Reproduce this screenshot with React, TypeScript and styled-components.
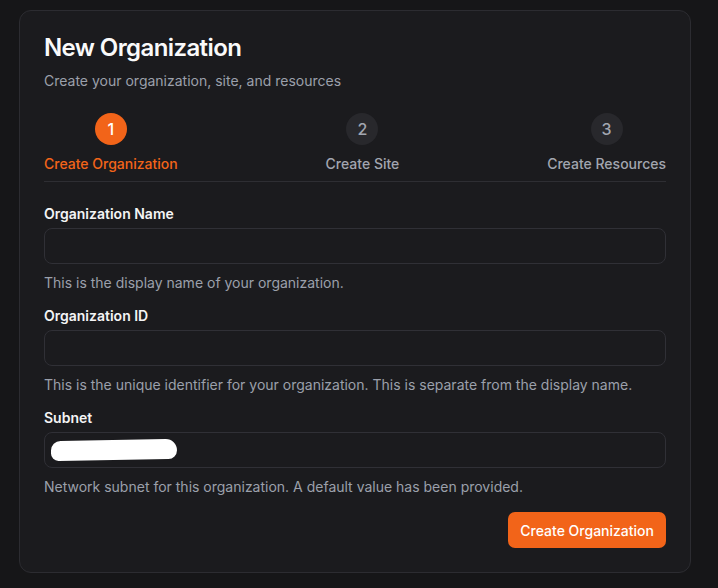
import React from "react";
import styled, { createGlobalStyle } from "styled-components";

const Global = createGlobalStyle`
  html, body { margin: 0; padding: 0; background: #161618; }
  body { font-family: Inter, "Noto Sans", sans-serif; -webkit-font-smoothing: antialiased; }
  * { box-sizing: border-box; }
`;

const Page = styled.div`
  padding: 10px 0 0 19px;
  width: 718px;
  height: 588px;
`;

const Card = styled.div`
  width: 672px;
  background: #1b1b1e;
  border: 1px solid #2c2c31;
  border-radius: 12px;
  padding: 21px 24px 24px 24px;
  display: flex;
  flex-direction: column;
`;

const Title = styled.h1`
  margin: 0;
  font-size: 24px;
  line-height: 32px;
  font-weight: 600;
  color: #fafafa;
  letter-spacing: -0.6px;
`;

const Subtitle = styled.p`
  margin: 7px 0 0 0;
  font-size: 14px;
  line-height: 20px;
  color: #9ba0ab;
`;

const Steps = styled.div`
  margin-top: 22px;
  display: flex;
  justify-content: space-between;
  padding-bottom: 7px;
  border-bottom: 1px solid #2e2e33;
`;

const Step = styled.div`
  display: flex;
  flex-direction: column;
  align-items: center;
  gap: 9px;
`;

const Circle = styled.div<{ $active?: boolean }>`
  width: 32px;
  height: 32px;
  border-radius: 50%;
  display: flex;
  align-items: center;
  justify-content: center;
  font-size: 16px;
  font-weight: 500;
  background: ${(p) => (p.$active ? "#f26419" : "#28282c")};
  color: ${(p) => (p.$active ? "#ffffff" : "#a2a6b0")};
`;

const StepLabel = styled.span<{ $active?: boolean }>`
  font-size: 14px;
  line-height: 20px;
  font-weight: 500;
  color: ${(p) => (p.$active ? "#f26419" : "#a2a6b0")};
`;

const Form = styled.div`
  margin-top: 25px;
  display: flex;
  flex-direction: column;
  gap: 16px;
`;

const Field = styled.div`
  display: flex;
  flex-direction: column;
`;

const Label = styled.label`
  font-size: 14px;
  line-height: 14px;
  font-weight: 600;
  color: #f4f4f5;
`;

const InputBox = styled.div`
  margin-top: 7px;
  height: 36px;
  border: 1px solid #303036;
  border-radius: 8px;
  background: #1b1b1e;
  display: flex;
  align-items: center;
  padding: 0 6px;
`;

const Redaction = styled.span`
  display: block;
  width: 126px;
  height: 20px;
  background: #ffffff;
  border-radius: 10px 12px 9px 8px;
  transform: skewY(-1deg);
`;

const Description = styled.p`
  margin: 9px 0 0 0;
  font-size: 14px;
  line-height: 20px;
  color: #9ba0ab;
`;

const Actions = styled.div`
  margin-top: 15px;
  display: flex;
  justify-content: flex-end;
`;

const Button = styled.button`
  height: 36px;
  padding: 0 12px;
  border: none;
  border-radius: 7px;
  background: #f26419;
  color: #ffffff;
  font-family: Inter, "Noto Sans", sans-serif;
  font-size: 14px;
  font-weight: 500;
  cursor: pointer;
`;

const steps = [
  { n: 1, label: "Create Organization", active: true },
  { n: 2, label: "Create Site", active: false },
  { n: 3, label: "Create Resources", active: false },
];

const fields = [
  { label: "Organization Name", desc: "This is the display name of your organization.", redacted: false },
  {
    label: "Organization ID",
    desc: "This is the unique identifier for your organization. This is separate from the display name.",
    redacted: false,
  },
  { label: "Subnet", desc: "Network subnet for this organization. A default value has been provided.", redacted: true },
];

export default function App() {
  return (
    <>
      <Global />
      <Page>
        <Card>
          <Title>New Organization</Title>
          <Subtitle>Create your organization, site, and resources</Subtitle>
          <Steps>
            {steps.map((s) => (
              <Step key={s.n}>
                <Circle $active={s.active}>{s.n}</Circle>
                <StepLabel $active={s.active}>{s.label}</StepLabel>
              </Step>
            ))}
          </Steps>
          <Form>
            {fields.map((f) => (
              <Field key={f.label}>
                <Label>{f.label}</Label>
                <InputBox>{f.redacted && <Redaction />}</InputBox>
                <Description>{f.desc}</Description>
              </Field>
            ))}
          </Form>
          <Actions>
            <Button>Create Organization</Button>
          </Actions>
        </Card>
      </Page>
    </>
  );
}
